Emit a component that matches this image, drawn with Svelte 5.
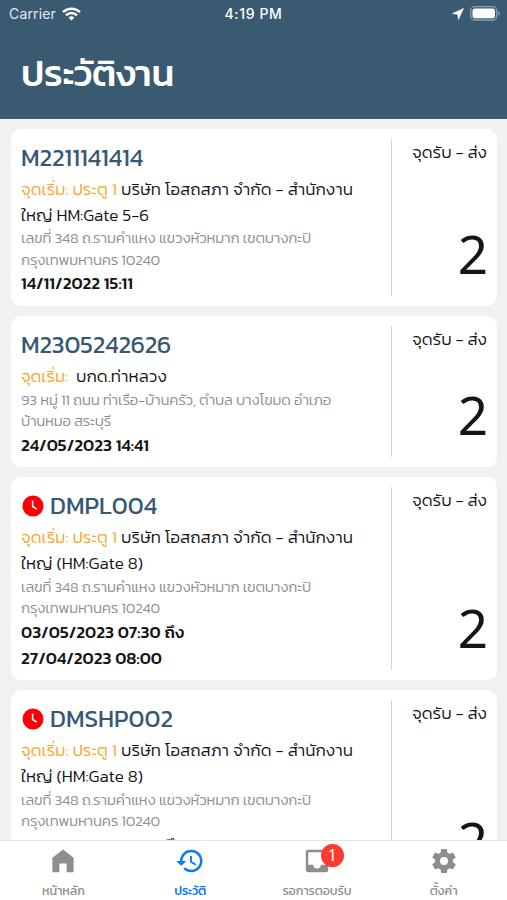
<script lang="ts">
	type Line = { text: string; fit: number };
	type Job = {
		code: Line;
		late?: boolean;
		start: Line;
		place: Line[];
		address: Line[];
		dates: Line[];
	};

	const osotspa: Line = { text: 'บริษัท โอสถสภา จำกัด - สำนักงาน', fit: 232 };
	const gate: Line = { text: 'จุดเริ่ม: ประตู 1', fit: 96 };
	const huamak: Line[] = [
		{ text: 'เลขที่ 348 ถ.รามคำแหง แขวงหัวหมาก เขตบางกะปิ', fit: 290 },
		{ text: 'กรุงเทพมหานคร 10240', fit: 139 },
	];

	const jobs: Job[] = [
		{
			code: { text: 'M2211141414', fit: 122 },
			start: gate,
			place: [osotspa, { text: 'ใหญ่ HM:Gate 5-6', fit: 128 }],
			address: huamak,
			dates: [{ text: '14/11/2022 15:11', fit: 112 }],
		},
		{
			code: { text: 'M2305242626', fit: 150 },
			start: { text: 'จุดเริ่ม:', fit: 47 },
			place: [{ text: 'บกด.ท่าหลวง', fit: 91 }],
			address: [
				{ text: '93 หมู่ 11 ถนน ท่าเรือ-บ้านครัว, ตำบล บางโขมด อำเภอ', fit: 310 },
				{ text: 'บ้านหมอ สระบุรี', fit: 90 },
			],
			dates: [{ text: '24/05/2023 14:41', fit: 128 }],
		},
		{
			code: { text: 'DMPL004', fit: 107 },
			late: true,
			start: gate,
			place: [osotspa, { text: 'ใหญ่ (HM:Gate 8)', fit: 122 }],
			address: huamak,
			dates: [
				{ text: '03/05/2023 07:30 ถึง', fit: 163 },
				{ text: '27/04/2023 08:00', fit: 141 },
			],
		},
		{
			code: { text: 'DMSHP002', fit: 123 },
			late: true,
			start: gate,
			place: [osotspa, { text: 'ใหญ่ (HM:Gate 8)', fit: 122 }],
			address: huamak,
			dates: [
				{ text: '28/04/2023 07:30 ถึง', fit: 163 },
				{ text: '28/04/2023 08:00', fit: 141 },
			],
		},
	];

	const tabs = [
		{ icon: 'home', label: { text: 'หน้าหลัก', fit: 43 } },
		{ icon: 'history', label: { text: 'ประวัติ', fit: 32 }, active: true },
		{ icon: 'inbox', label: { text: 'รอการตอบรับ', fit: 69 }, badge: 1 },
		{ icon: 'settings', label: { text: 'ตั้งค่า', fit: 28 } },
	];

	// spreads the letters of a line evenly over the given width
	function fit(node: HTMLElement, width: number) {
		const clusters = [...new Intl.Segmenter('th').segment(node.textContent ?? '')].length;
		const natural = node.getBoundingClientRect().width;
		node.style.letterSpacing = `${(width - natural) / clusters}px`;
	}
</script>

<div class="screen">
	<header>
		<div class="status">
			<div class="carrier">
				<span use:fit={47}>Carrier</span>
				<svg width="19" height="14" viewBox="0 0 19 14" fill="none" stroke="#fff" stroke-width="2.5">
					<path d="M1 5.2a12 12 0 0 1 17 0" />
					<path d="M4 8.3a7.8 7.8 0 0 1 11 0" />
					<path d="M6.6 10.6a4.2 4.2 0 0 1 5.8 0L9.5 13.6z" fill="#fff" stroke="none" />
				</svg>
			</div>
			<b use:fit={58}>4:19 PM</b>
			<div class="power">
				<svg width="12" height="12" viewBox="0 0 12 12"><path d="M11.500 .5L.5 5.600l5.200.7.7 5.200z" fill="#fff" stroke="#fff" stroke-width=".6" /></svg>
				<svg width="31" height="15" viewBox="0 0 31 15">
					<rect x=".7" y=".7" width="26" height="13.3" rx="4" fill="none" stroke="#8fa1b0" stroke-width="1.3" />
					<rect x="2.5" y="2.5" width="22.5" height="9.8" rx="2.3" fill="#fff" />
					<path d="M28.3 5q3 2.300 0 4.700z" fill="#8fa1b0" />
				</svg>
			</div>
		</div>
		<h1><span use:fit={153}>ประวัติงาน</span></h1>
	</header>

	<main>
		{#each jobs as job}
			<article>
				<div class="info">
					<h2>
						{#if job.late}
							<svg width="22" height="22" viewBox="0 0 22 22">
								<circle cx="11" cy="11" r="10.5" fill="#fb0007" />
								<path d="M10.600 5.500v6l4.200 2.700" fill="none" stroke="#fff" stroke-width="1.5" />
							</svg>
						{/if}
						<span use:fit={job.code.fit}>{job.code.text}</span>
					</h2>
					<p class="place">
						<span class="start" class:wide={job.place.length === 1} use:fit={job.start.fit}>{job.start.text}</span>
						<span use:fit={job.place[0].fit}>{job.place[0].text}</span>
					</p>
					{#each job.place.slice(1) as line}
						<p class="place"><span use:fit={line.fit}>{line.text}</span></p>
					{/each}
					{#each job.address as line}
						<p class="address"><span use:fit={line.fit}>{line.text}</span></p>
					{/each}
					{#each job.dates as line}
						<p class="date"><span use:fit={line.fit}>{line.text}</span></p>
					{/each}
				</div>
				<div class="stops">
					<span class="caption" use:fit={75}>จุดรับ - ส่ง</span>
					<span class="count">2</span>
				</div>
			</article>
		{/each}
	</main>

	<nav>
		{#each tabs as tab}
			<a href="#{tab.icon}" class:active={tab.active}>
				<span class="icon">
					<svg width="30" height="30" viewBox="0 0 24 24" fill="currentColor">
						{#if tab.icon === 'home'}
							<path d="M3.500 21V9.300L12 2.800l8.500 6.500V21h-5.600v-7H9.100v7z" />
						{:else if tab.icon === 'history'}
							<path d="M13 3a9 9 0 0 0-9 9H1l3.890 3.890.07.14L9 12H6a7 7 0 1 1 2.060 4.940l-1.420 1.420A9 9 0 1 0 13 3zm-1 5v5l4.280 2.540.72-1.210-3.500-2.080V8z" />
						{:else if tab.icon === 'inbox'}
							<path d="M19 3H4.990A1.990 1.990 0 0 0 3 5v14a2 2 0 0 0 1.990 2H19a2 2 0 0 0 2-2V5a2 2 0 0 0-2-2zm0 12h-4a3 3 0 0 1-6 0H4.990V5H19z" />
						{:else}
							<path d="M19.140 12.940c.04-.3.06-.61.06-.94s-.02-.64-.07-.94l2.030-1.580a.49.49 0 0 0 .12-.61l-1.920-3.320a.488.488 0 0 0-.59-.22l-2.390.96c-.5-.38-1.030-.7-1.620-.94l-.36-2.540a.484.484 0 0 0-.48-.41h-3.840c-.24 0-.43.17-.47.41l-.36 2.540c-.59.24-1.130.57-1.620.94l-2.390-.96c-.22-.08-.47 0-.59.22L2.740 8.870c-.12.21-.08.47.12.61l2.030 1.580c-.05.3-.09.63-.09.94s.02.64.07.94l-2.030 1.580a.49.49 0 0 0-.12.61l1.920 3.320c.12.22.37.29.59.22l2.390-.96c.5.38 1.030.7 1.620.94l.36 2.540c.05.24.24.41.48.41h3.840c.24 0 .44-.17.47-.41l.36-2.540c.59-.24 1.130-.56 1.620-.94l2.390.96c.22.08.47 0 .59-.22l1.920-3.320c.12-.22.07-.47-.12-.61zM12 15.200A3.200 3.200 0 1 1 12 8.800a3.200 3.200 0 0 1 0 6.400z" />
						{/if}
					</svg>
					{#if tab.badge}<i>{tab.badge}</i>{/if}
				</span>
				<span class="label" use:fit={tab.label.fit}>{tab.label.text}</span>
			</a>
		{/each}
	</nav>
</div>

<style>
	:global(body) {
		margin: 0;
	}
	.screen {
		display: flex;
		flex-direction: column;
		width: 507px;
		height: 900px;
		overflow: hidden;
		background: #f1f1f1;
		color: #151515;
		font-family: Kanit, Prompt, 'Noto Sans Thai', 'Noto Sans', sans-serif;
		white-space: nowrap;
	}
	h1, h2, p {
		margin: 0;
		font-weight: 400;
	}
	header {
		flex: none;
		height: 119px;
		background: #3a5a72;
		color: #fff;
	}
	.status {
		display: grid;
		grid-template-columns: 1fr auto 1fr;
		align-items: center;
		height: 27px;
		padding: 0 6px 0 9px;
		font: 14px Inter, sans-serif;
	}
	.status b {
		margin-right: 3px;
		font-weight: 500;
	}
	.carrier {
		display: flex;
		align-items: center;
		gap: 6px;
		color: #e3e9ee;
	}
	.power {
		display: flex;
		justify-content: flex-end;
		align-items: center;
		gap: 6px;
	}
	h1 {
		padding-left: 21px;
		font-size: 37px;
		line-height: 93px;
		font-weight: 500;
	}
	main {
		flex: 1;
		min-height: 0;
		display: flex;
		flex-direction: column;
		gap: 10px;
		padding: 10px 10px 0 11px;
		overflow: hidden;
	}
	article {
		flex: none;
		display: flex;
		padding: 10px;
		border-radius: 10px;
		background: #fff;
	}
	.info {
		width: 370px;
		border-right: 1px solid #d4d4d4;
	}
	h2 {
		display: flex;
		align-items: center;
		gap: 7px;
		height: 37px;
		color: #375873;
		font-size: 24.5px;
		line-height: 39px;
	}
	h2 svg {
		margin-left: 1px;
		margin-right: -1px;
	}
	.place, .date {
		height: 25.7px;
		font-size: 17px;
		line-height: 26px;
	}
	.place, .caption {
		font-weight: 300;
	}
	.start {
		color: #f9a526;
	}
	.start.wide {
		margin-right: 4px;
	}
	.address {
		height: 21.5px;
		color: #8f8f8f;
		font-size: 15px;
		font-weight: 300;
		line-height: 21.5px;
	}
	.date {
		font-weight: 500;
		line-height: 27.5px;
	}
	.stops {
		flex: 1;
		display: flex;
		flex-direction: column;
		justify-content: space-between;
		align-items: flex-end;
	}
	.caption {
		font-size: 17px;
		line-height: 27px;
	}
	.count {
		font: 400 53px/85px 'Noto Sans', sans-serif;
		margin-right: -1px;
	}
	nav {
		flex: none;
		display: grid;
		grid-template-columns: repeat(4, 1fr);
		height: 59px;
		border-top: 1px solid #e4e4e4;
		background: #fff;
	}
	nav a {
		display: flex;
		flex-direction: column;
		align-items: center;
		padding-top: 5px;
		color: #8e8e8e;
		text-decoration: none;
	}
	nav a.active {
		color: #0b7cf5;
		font-weight: 500;
	}
	.icon {
		position: relative;
		height: 30px;
	}
	.icon i {
		position: absolute;
		top: -2px;
		left: 19px;
		width: 23px;
		height: 23px;
		border-radius: 50%;
		background: #fc3b30;
		color: #fff;
		font: 16px/23px 'Noto Sans', sans-serif;
		text-align: center;
	}
	.label {
		font-size: 12.5px;
		line-height: 29px;
	}
</style>
